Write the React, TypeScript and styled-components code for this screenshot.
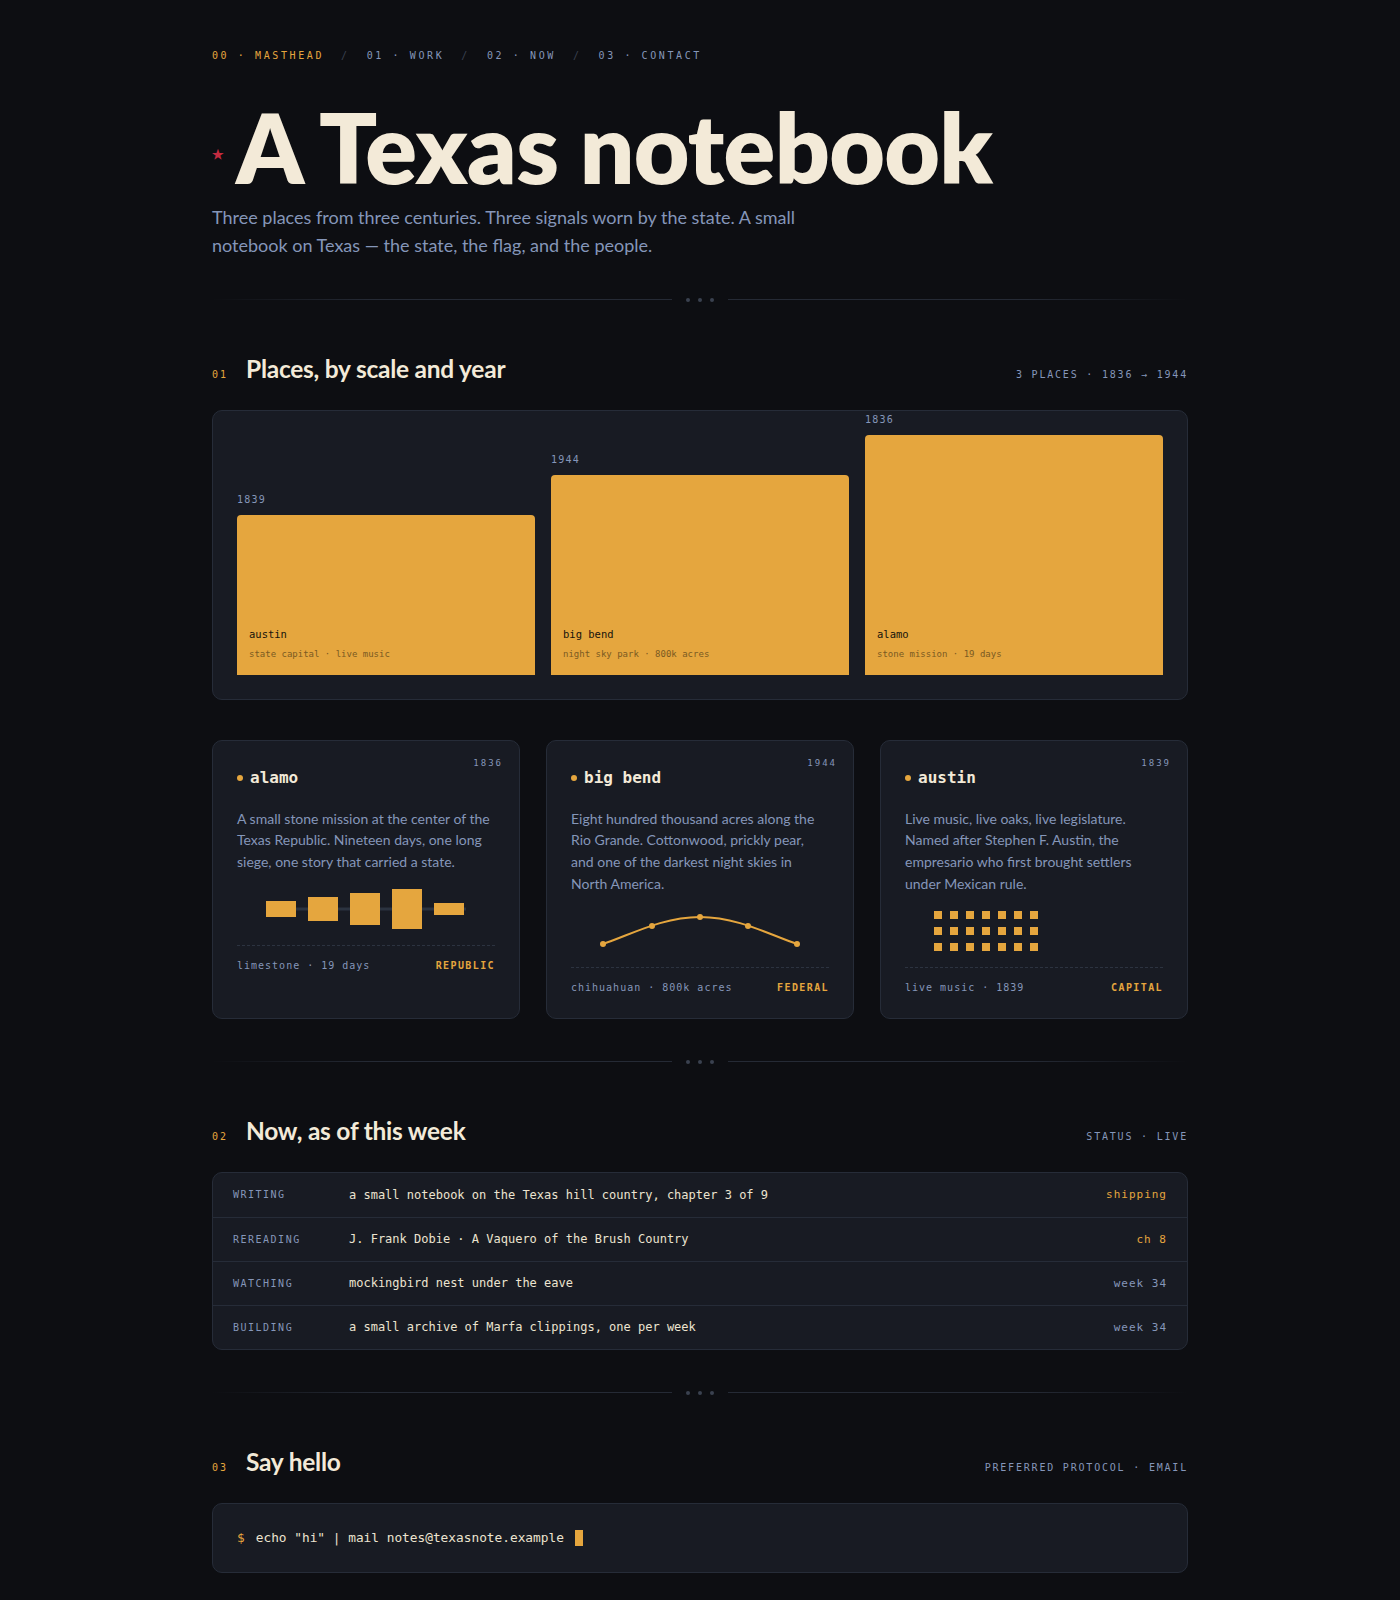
import React from "react";
import styled, { createGlobalStyle } from "styled-components";

const sans = `"Lato", "Noto Sans", sans-serif`;
const mono = `"DejaVu Sans Mono", "Liberation Mono", monospace`;

const c = {
  bg: "#0d0e12",
  panel: "#181b23",
  border: "#262c38",
  cream: "#f3ead8",
  muted: "#8596b9",
  orange: "#e5a63e",
  dim: "#3a4150",
  red: "#c42b40",
};

const GlobalStyle = createGlobalStyle`
  html, body {
    margin: 0;
    padding: 0;
    background: ${c.bg};
    color: ${c.cream};
    font-family: ${sans};
  }
  * { box-sizing: border-box; }
`;

const Page = styled.main`
  max-width: 976px;
  margin: 0 auto;
  padding: 49px 0 48px;
`;

// masthead nav
const Nav = styled.nav`
  display: flex;
  align-items: center;
  gap: 17px;
  font-family: ${mono};
  font-size: 10px;
  line-height: 14px;
  letter-spacing: 2.6px;
  text-transform: uppercase;
`;

const NavItem = styled.span<{ $active?: boolean }>`
  color: ${(p) => (p.$active ? c.orange : c.muted)};
`;

const NavSlash = styled.span`
  color: ${c.dim};
`;

const Title = styled.h1`
  display: flex;
  align-items: center;
  gap: 12px;
  margin: 36px 0 0;
  font-size: 96px;
  line-height: 1;
  font-weight: 800;
  letter-spacing: -0.007em;
  color: ${c.cream};
`;

const Star = styled.span`
  font-size: 13px;
  color: ${c.red};
  letter-spacing: 0;
  margin-top: 14px;
`;

const Lede = styled.p`
  margin: 9px 0 0;
  max-width: 600px;
  font-size: 18px;
  line-height: 1.55;
  color: ${c.muted};
`;

// section divider with three dots
const Divider = styled.div<{ $top?: number }>`
  display: flex;
  align-items: center;
  height: 8px;
  margin: ${(p) => p.$top ?? 39}px 0 49px;
`;

const DividerLine = styled.div<{ $flip?: boolean }>`
  flex: 1;
  height: 1px;
  background: linear-gradient(
    ${(p) => (p.$flip ? "270deg" : "90deg")},
    transparent,
    #252a35 35%,
    #252a35
  );
`;

const Dots = styled.div`
  display: flex;
  gap: 8px;
  margin: 0 14px;
`;

const Dot = styled.span`
  width: 4px;
  height: 4px;
  border-radius: 50%;
  background: ${c.dim};
`;

const SectionHead = styled.header`
  display: flex;
  align-items: baseline;
  margin-bottom: 25px;
`;

const SectionNum = styled.span`
  font-family: ${mono};
  font-size: 10px;
  letter-spacing: 2px;
  color: ${c.orange};
  width: 34px;
`;

const SectionTitle = styled.h2`
  margin: 0;
  font-size: 24.5px;
  line-height: 32px;
  font-weight: 700;
  letter-spacing: -0.01em;
  color: ${c.cream};
`;

const SectionMeta = styled.span`
  margin-left: auto;
  font-family: ${mono};
  font-size: 10px;
  letter-spacing: 1.8px;
  text-transform: uppercase;
  color: ${c.muted};
`;

const Panel = styled.div`
  background: ${c.panel};
  border: 1px solid ${c.border};
  border-radius: 10px;
`;

// bar chart of the three places
const Chart = styled(Panel)`
  display: grid;
  grid-template-columns: repeat(3, 1fr);
  gap: 16px;
  align-items: end;
  padding: 2px 24px 24px;
`;

const Column = styled.div`
  display: flex;
  flex-direction: column;
`;

const BarYear = styled.span`
  font-family: ${mono};
  font-size: 10px;
  line-height: 14px;
  letter-spacing: 1.2px;
  color: ${c.muted};
  margin-bottom: 8px;
`;

const Bar = styled.div<{ $height: number }>`
  height: ${(p) => p.$height}px;
  background: ${c.orange};
  border-radius: 4px 4px 0 0;
  display: flex;
  flex-direction: column;
  justify-content: flex-end;
  padding: 0 12px 14px;
  font-family: ${mono};
`;

const BarName = styled.span`
  font-size: 10.5px;
  line-height: 14px;
  color: #16130c;
  margin-bottom: 6px;
`;

const BarSub = styled.span`
  font-size: 9px;
  line-height: 14px;
  color: #7a5a22;
`;

const Cards = styled.div`
  display: grid;
  grid-template-columns: repeat(3, 1fr);
  gap: 26px;
  margin-top: 40px;
`;

const Card = styled(Panel)`
  position: relative;
  padding: 26px 24px 24px;
`;

const CardYear = styled.span`
  position: absolute;
  top: 16px;
  right: 16px;
  font-family: ${mono};
  font-size: 9px;
  line-height: 12px;
  letter-spacing: 2px;
  color: ${c.muted};
`;

const CardTitle = styled.h3`
  display: flex;
  align-items: center;
  gap: 7px;
  margin: 0;
  font-family: ${mono};
  font-size: 16px;
  line-height: 22px;
  font-weight: 700;
  color: ${c.cream};

  &::before {
    content: "";
    width: 6px;
    height: 6px;
    border-radius: 50%;
    background: ${c.orange};
  }
`;

const CardText = styled.p`
  margin: 19px 0 0;
  font-size: 14px;
  line-height: 21.7px;
  color: ${c.muted};
`;

const Viz = styled.svg`
  display: block;
  margin: 16px auto 0;
`;

const CardFoot = styled.footer`
  display: flex;
  justify-content: space-between;
  margin-top: 16px;
  padding-top: 14px;
  border-top: 1px dashed #2c3340;
  font-family: ${mono};
  font-size: 10px;
  line-height: 12px;
  letter-spacing: 1px;
  color: ${c.muted};
`;

const FootTag = styled.span`
  font-weight: 700;
  letter-spacing: 1.4px;
  color: ${c.orange};
`;

// now table
const Table = styled(Panel)`
  overflow: hidden;
`;

const Row = styled.div`
  display: grid;
  grid-template-columns: 116px 1fr auto;
  align-items: center;
  height: 44px;
  padding: 0 20px;
  font-family: ${mono};

  & + & {
    border-top: 1px solid ${c.border};
  }
`;

const RowLabel = styled.span`
  font-size: 10px;
  letter-spacing: 1.5px;
  color: ${c.muted};
`;

const RowValue = styled.span`
  font-size: 12px;
  color: #ece4d0;
`;

const RowMeta = styled.span<{ $hot?: boolean }>`
  font-size: 11px;
  letter-spacing: 1px;
  color: ${(p) => (p.$hot ? c.orange : c.muted)};
`;

const Terminal = styled(Panel)`
  display: flex;
  align-items: center;
  height: 70px;
  padding: 0 24px;
  font-family: ${mono};
  font-size: 12.8px;
  color: #ece4d0;
`;

const Prompt = styled.span`
  color: ${c.orange};
  margin-right: 11px;
`;

const Cursor = styled.span`
  width: 8px;
  height: 16px;
  margin-left: 11px;
  background: ${c.orange};
`;

const places = [
  { name: "austin", year: 1839, sub: "state capital · live music", height: 160 },
  { name: "big bend", year: 1944, sub: "night sky park · 800k acres", height: 200 },
  { name: "alamo", year: 1836, sub: "stone mission · 19 days", height: 240 },
];

const siege = [16, 24, 32, 40, 12];

const SiegeViz = () => (
  <Viz width="200" height="40" viewBox="0 0 200 40">
    <rect x="0" y="18.5" width="200" height="3" fill="#2b3340" />
    {siege.map((h, i) => (
      <rect key={i} x={i * 42} y={20 - h / 2} width="30" height={h} fill={c.orange} />
    ))}
  </Viz>
);

const arcPoints = [
  [3, 33],
  [52, 15],
  [100, 6],
  [148, 15],
  [197, 33],
];

const ArcViz = () => (
  <Viz width="200" height="40" viewBox="0 0 200 40">
    <path
      d="M3 33 C 30 24, 62 6, 100 6 C 138 6, 170 24, 197 33"
      fill="none"
      stroke={c.orange}
      strokeWidth="2"
    />
    {arcPoints.map(([x, y], i) => (
      <circle key={i} cx={x} cy={y} r="3" fill={c.orange} />
    ))}
  </Viz>
);

const GridViz = () => (
  <Viz width="200" height="40" viewBox="0 0 200 40">
    {Array.from({ length: 21 }).map((_, i) => (
      <rect
        key={i}
        x={(i % 7) * 16}
        y={Math.floor(i / 7) * 16}
        width="8"
        height="8"
        fill={c.orange}
      />
    ))}
  </Viz>
);

const cards = [
  {
    name: "alamo",
    year: 1836,
    text: "A small stone mission at the center of the Texas Republic. Nineteen days, one long siege, one story that carried a state.",
    viz: <SiegeViz />,
    foot: "limestone · 19 days",
    tag: "REPUBLIC",
  },
  {
    name: "big bend",
    year: 1944,
    text: "Eight hundred thousand acres along the Rio Grande. Cottonwood, prickly pear, and one of the darkest night skies in North America.",
    viz: <ArcViz />,
    foot: "chihuahuan · 800k acres",
    tag: "FEDERAL",
  },
  {
    name: "austin",
    year: 1839,
    text: "Live music, live oaks, live legislature. Named after Stephen F. Austin, the empresario who first brought settlers under Mexican rule.",
    viz: <GridViz />,
    foot: "live music · 1839",
    tag: "CAPITAL",
  },
];

const now = [
  { label: "WRITING", value: "a small notebook on the Texas hill country, chapter 3 of 9", meta: "shipping", hot: true },
  { label: "REREADING", value: "J. Frank Dobie · A Vaquero of the Brush Country", meta: "ch 8", hot: true },
  { label: "WATCHING", value: "mockingbird nest under the eave", meta: "week 34" },
  { label: "BUILDING", value: "a small archive of Marfa clippings, one per week", meta: "week 34" },
];

const Break = ({ top }: { top?: number }) => (
  <Divider $top={top}>
    <DividerLine />
    <Dots>
      <Dot />
      <Dot />
      <Dot />
    </Dots>
    <DividerLine $flip />
  </Divider>
);

const App = () => {
  return (
    <>
      <GlobalStyle />
      <Page>
        <Nav>
          <NavItem $active>00 · masthead</NavItem>
          <NavSlash>/</NavSlash>
          <NavItem>01 · work</NavItem>
          <NavSlash>/</NavSlash>
          <NavItem>02 · now</NavItem>
          <NavSlash>/</NavSlash>
          <NavItem>03 · contact</NavItem>
        </Nav>

        <Title>
          <Star>★</Star>
          A Texas notebook
        </Title>
        <Lede>
          Three places from three centuries. Three signals worn by the state. A small
          notebook on Texas — the state, the flag, and the people.
        </Lede>

        <Break top={36} />

        <section>
          <SectionHead>
            <SectionNum>01</SectionNum>
            <SectionTitle>Places, by scale and year</SectionTitle>
            <SectionMeta>3 places · 1836 → 1944</SectionMeta>
          </SectionHead>
          <Chart>
            {places.map((p) => (
              <Column key={p.name}>
                <BarYear>{p.year}</BarYear>
                <Bar $height={p.height}>
                  <BarName>{p.name}</BarName>
                  <BarSub>{p.sub}</BarSub>
                </Bar>
              </Column>
            ))}
          </Chart>
          <Cards>
            {cards.map((card) => (
              <Card key={card.name}>
                <CardYear>{card.year}</CardYear>
                <CardTitle>{card.name}</CardTitle>
                <CardText>{card.text}</CardText>
                {card.viz}
                <CardFoot>
                  <span>{card.foot}</span>
                  <FootTag>{card.tag}</FootTag>
                </CardFoot>
              </Card>
            ))}
          </Cards>
        </section>

        <Break />

        <section>
          <SectionHead>
            <SectionNum>02</SectionNum>
            <SectionTitle>Now, as of this week</SectionTitle>
            <SectionMeta>status · live</SectionMeta>
          </SectionHead>
          <Table>
            {now.map((r) => (
              <Row key={r.label}>
                <RowLabel>{r.label}</RowLabel>
                <RowValue>{r.value}</RowValue>
                <RowMeta $hot={r.hot}>{r.meta}</RowMeta>
              </Row>
            ))}
          </Table>
        </section>

        <Break />

        <section>
          <SectionHead>
            <SectionNum>03</SectionNum>
            <SectionTitle>Say hello</SectionTitle>
            <SectionMeta>preferred protocol · email</SectionMeta>
          </SectionHead>
          <Terminal>
            <Prompt>$</Prompt>
            echo "hi" | mail notes@texasnote.example
            <Cursor />
          </Terminal>
        </section>
      </Page>
    </>
  );
};

export default App;
